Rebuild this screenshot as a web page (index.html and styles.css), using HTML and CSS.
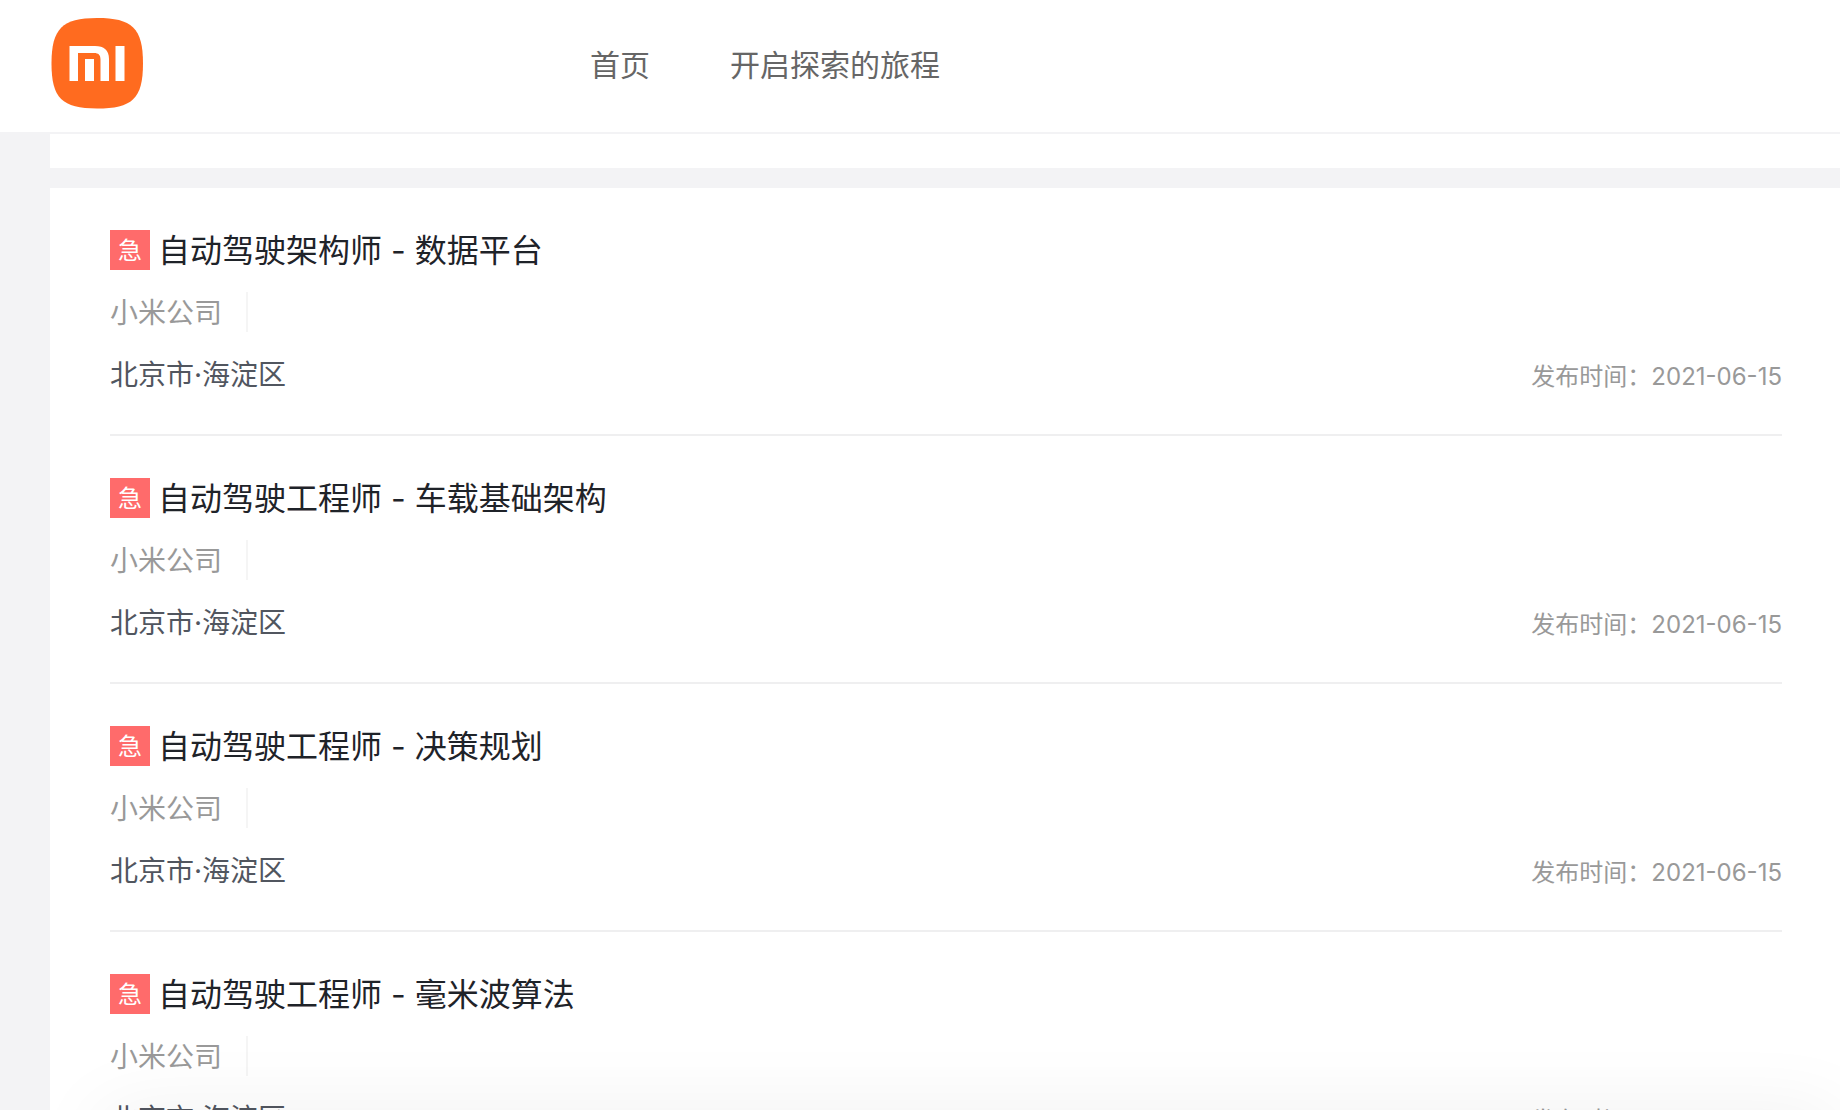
FILE: index.html
```html
<!DOCTYPE html>
<html lang="zh-CN">
<head>
    <meta charset="UTF-8">
    <title>小米招聘</title>
    <link rel="stylesheet" href="styles.css">
</head>
<body>
    <header class="header">
        <a class="logo" href="#" aria-label="小米">
            <svg width="94" height="94" viewBox="0 0 94 94">
                <path fill="#ff6b1f" d="M47 2C82 2 93 12 93 47.500S82 92.500 47 92.500 1.500 82 1.500 47.500 12 2 47 2Z"/>
                <path fill="#fff" d="M19.500 30H45C54 30 59 34 59 43V65H50.500V43.500C50.500 39 48.500 37 44 37H28V65H19.500Z"/>
                <path fill="#fff" d="M35 43H44V65H35ZM65.500 30H74.500V65H65.500Z"/>
            </svg>
        </a>
        <nav class="nav">
            <a href="#">首页</a>
            <a href="#">开启探索的旅程</a>
        </nav>
    </header>

    <main class="content">
        <div class="filter"></div>

        <!-- 职位列表 -->
        <ul class="job-list">
            <li class="job">
                <div class="job-title"><span class="urgent">急</span><a href="#">自动驾驶架构师 - 数据平台</a></div>
                <div class="job-company"><span>小米公司</span></div>
                <div class="job-info">
                    <span class="job-place">北京市·海淀区</span>
                    <span class="job-date">发布时间：2021-06-15</span>
                </div>
            </li>
            <li class="job">
                <div class="job-title"><span class="urgent">急</span><a href="#">自动驾驶工程师 - 车载基础架构</a></div>
                <div class="job-company"><span>小米公司</span></div>
                <div class="job-info">
                    <span class="job-place">北京市·海淀区</span>
                    <span class="job-date">发布时间：2021-06-15</span>
                </div>
            </li>
            <li class="job">
                <div class="job-title"><span class="urgent">急</span><a href="#">自动驾驶工程师 - 决策规划</a></div>
                <div class="job-company"><span>小米公司</span></div>
                <div class="job-info">
                    <span class="job-place">北京市·海淀区</span>
                    <span class="job-date">发布时间：2021-06-15</span>
                </div>
            </li>
            <li class="job">
                <div class="job-title"><span class="urgent">急</span><a href="#">自动驾驶工程师 - 毫米波算法</a></div>
                <div class="job-company"><span>小米公司</span></div>
                <div class="job-info">
                    <span class="job-place">北京市·海淀区</span>
                    <span class="job-date">发布时间：2021-06-15</span>
                </div>
            </li>
        </ul>
        <div class="bottom-shadow"></div>
    </main>
</body>
</html>
```

FILE: styles.css
```css
* {
    box-sizing: border-box;
}

body {
    margin: 0;
    height: 100vh;
    display: flex;
    flex-direction: column;
    overflow: hidden;
    background-color: #f3f3f5;
    font-family: Inter, "Noto Sans CJK SC", sans-serif;
}

a {
    color: inherit;
    text-decoration: none;
}

.header {
    display: flex;
    flex-shrink: 0;
    align-items: center;
    height: 134px;
    padding: 0 50px;
    background-color: #fff;
    border-bottom: 2px solid #f3f3f5;
}

.logo {
    display: block;
    height: 100px;
    width: 94px;
}

.nav {
    display: flex;
    gap: 80px;
    margin-left: 446px;
    margin-bottom: 2px;
    font-size: 30px;
    line-height: 40px;
    color: #666;
}

.content {
    position: relative;
    flex: 1;
    min-height: 0;
    padding-left: 50px;
    overflow: hidden;
}

.filter {
    height: 34px;
    margin-bottom: 20px;
    background-color: #fff;
}

.job-list {
    margin: 0;
    padding: 0 58px 0 60px;
    list-style: none;
    background-color: #fff;
}

.job {
    display: flex;
    flex-direction: column;
    gap: 20px;
    padding: 42px 0 38px;
    border-bottom: 2px solid #efeff0;
    line-height: 42px;
}

.job-title {
    display: flex;
    gap: 8px;
    font-size: 32px;
    color: #1f2329;
}

.urgent {
    width: 40px;
    height: 40px;
    background-color: #ff6b6b;
    color: #fff;
    font-size: 24px;
    text-align: center;
}

.job-company {
    display: flex;
    height: 42px;
    font-size: 28px;
    color: #999;
}

.job-company span {
    height: 40px;
    padding-right: 24px;
    border-right: 2px solid #f5f5f5;
}

.job-info {
    display: flex;
    align-items: baseline;
    justify-content: space-between;
    height: 42px;
    font-size: 28px;
    color: #51565f;
}

.job-date {
    font-size: 24px;
    color: #999;
}

/* 底部阴影 */
.bottom-shadow {
    position: absolute;
    top: 100%;
    left: 100px;
    right: 0;
    height: 80px;
    box-shadow: 0 0 80px rgba(0, 0, 0, 0.06);
}
```
